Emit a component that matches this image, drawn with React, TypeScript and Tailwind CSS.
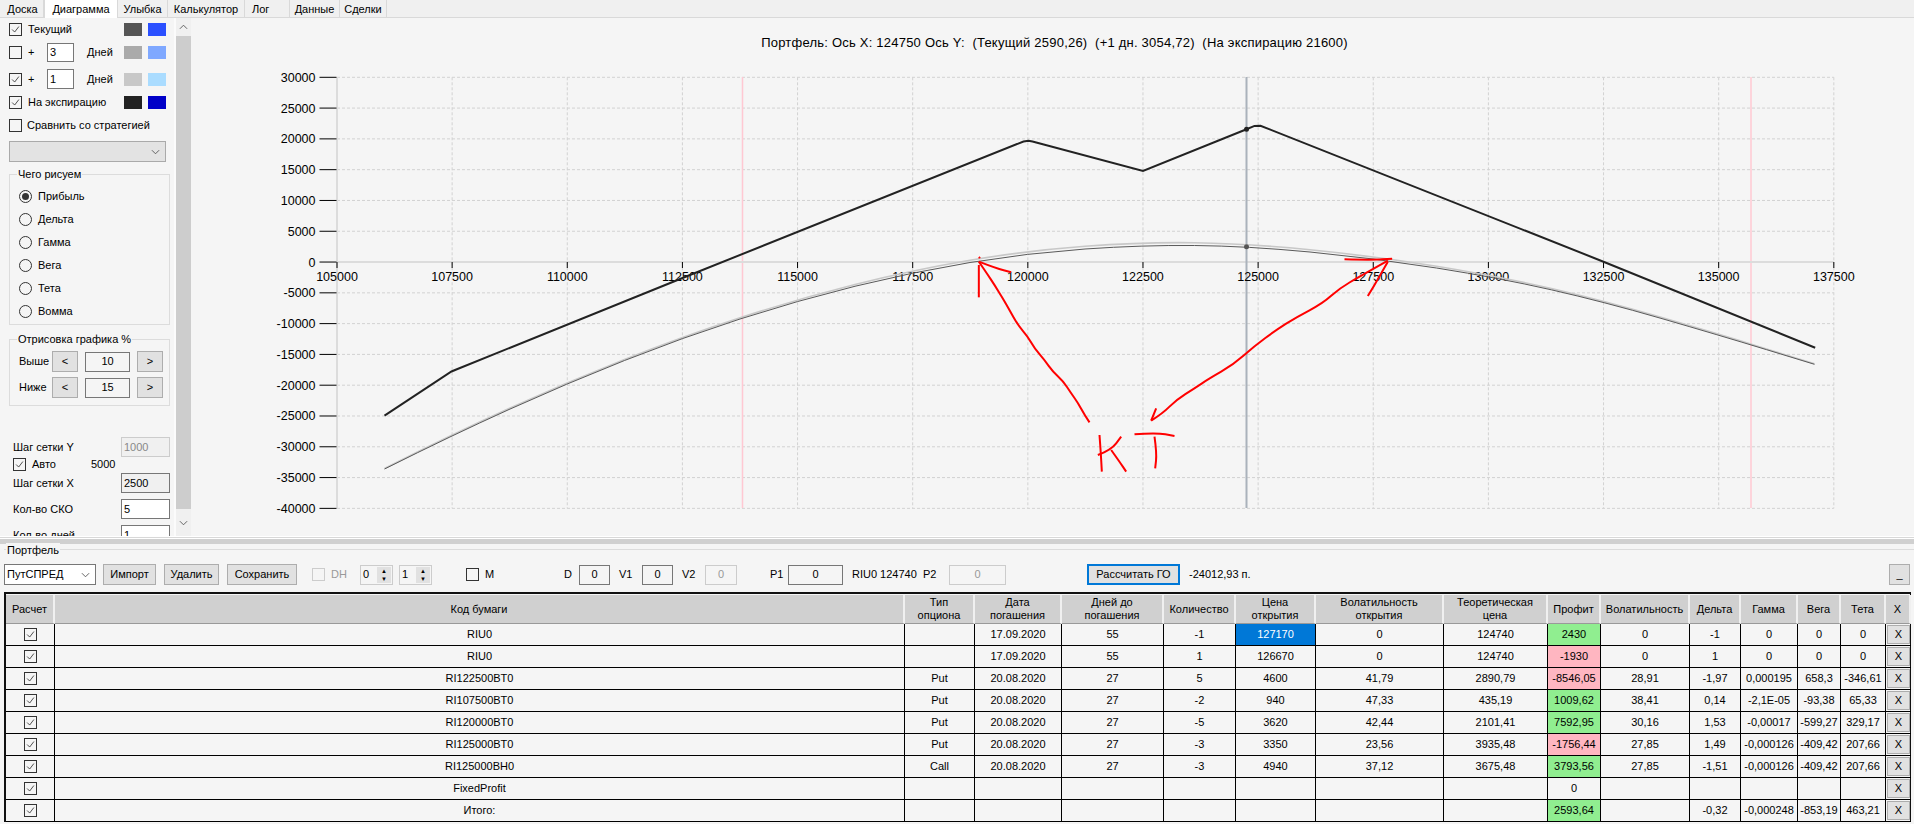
import React from 'react';

const Tick = () => (
  <svg viewBox="0 0 13 13" className="w-[11px] h-[11px]">
    <path d="M2.5 6.5 L5.5 9.5 L10.5 3" fill="none" stroke="#333" strokeWidth="1" />
  </svg>
);

const Check = ({ on = false, off = false }: { on?: boolean; off?: boolean }) => (
  <span className={`w-[13px] h-[13px] shrink-0 border flex items-center justify-center ${off ? 'border-[#ccc] bg-[#f5f5f5]' : 'border-[#333] bg-[#f5f5f5]'}`}>
    {on && <Tick />}
  </span>
);

const Radio = ({ label, on = false }: { label: string; on?: boolean }) => (
  <div className="h-[13px] flex items-center">
    <span className="w-[13px] h-[13px] rounded-full border border-[#333] flex items-center justify-center">
      {on && <span className="w-[7px] h-[7px] rounded-full bg-[#333]" />}
    </span>
    <span className="ml-[6px]">{label}</span>
  </div>
);

const Swatches = ({ a, b }: { a: string; b: string }) => (
  <div className="flex gap-[6px] ml-auto">
    <span className={`w-[18px] h-[13px] ${a}`} />
    <span className={`w-[18px] h-[13px] ${b}`} />
  </div>
);

const Chevron = () => (
  <svg viewBox="0 0 10 6" className="w-[9px] h-[6px]">
    <path d="M1 1 L5 5 L9 1" fill="none" stroke="#555" strokeWidth="1" />
  </svg>
);

const Group = ({ label, className, children }: { label: string; className: string; children: React.ReactNode }) => (
  <div className={`relative border border-[#dcdcdc] w-[161px] ${className}`}>
    <span className="absolute -top-[8px] left-[7px] px-px bg-[#f5f5f5] leading-[14px]">{label}</span>
    {children}
  </div>
);

const PercentRow = ({ label, value }: { label: string; value: string }) => (
  <div className="h-[21px] flex items-center">
    <span className="w-[42px] pl-[9px]">{label}</span>
    <button className="w-[26px] h-[21px] bg-[#e1e1e1] border border-[#adadad]">&lt;</button>
    <span className="ml-[7px] w-[45px] h-[20px] border border-[#777] flex items-center justify-center">{value}</span>
    <button className="ml-[7px] w-[26px] h-[21px] bg-[#e1e1e1] border border-[#adadad]">&gt;</button>
  </div>
);

const FieldRow = ({ label, value, className, inputClass }: { label: string; value: string; className: string; inputClass: string }) => (
  <div className={`h-[20px] flex items-center shrink-0 ${className}`}>
    <span className="w-[112px] pl-[4px]">{label}</span>
    <span className={`w-[49px] h-[20px] border flex items-center pl-[2px] ${inputClass}`}>{value}</span>
  </div>
);

const LeftPanel = () => (
  <div className="w-[174px] shrink-0 pl-[9px] overflow-hidden flex flex-col">
    <div className="mt-[5px] h-[13px] w-[157px] shrink-0 flex items-center">
      <Check on />
      <span className="ml-[6px]">Текущий</span>
      <Swatches a="bg-[#555555]" b="bg-[#2b50ff]" />
    </div>
    <div className="mt-[7px] h-[19px] w-[157px] shrink-0 flex items-center">
      <Check />
      <span className="ml-[6px] w-[19px]">+</span>
      <span className="w-[27px] h-[19px] border border-[#777] bg-white pl-[2px] flex items-center">3</span>
      <span className="ml-[13px]">Дней</span>
      <Swatches a="bg-[#aaaaaa]" b="bg-[#7fa8ff]" />
    </div>
    <div className="mt-[7px] h-[20px] w-[157px] shrink-0 flex items-center">
      <Check on />
      <span className="ml-[6px] w-[19px]">+</span>
      <span className="w-[27px] h-[20px] border border-[#777] bg-white pl-[2px] flex items-center">1</span>
      <span className="ml-[13px]">Дней</span>
      <Swatches a="bg-[#c8c8c8]" b="bg-[#aadcff]" />
    </div>
    <div className="mt-[7px] h-[13px] w-[157px] shrink-0 flex items-center">
      <Check on />
      <span className="ml-[6px]">На экспирацию</span>
      <Swatches a="bg-[#222222]" b="bg-[#0000c8]" />
    </div>
    <div className="mt-[10px] h-[13px] shrink-0 flex items-center">
      <Check />
      <span className="ml-[5px]">Сравнить со стратегией</span>
    </div>
    <div className="mt-[9px] h-[21px] w-[157px] shrink-0 bg-[#e3e3e3] border border-[#aaa] flex items-center justify-end pr-[5px]">
      <Chevron />
    </div>
    <Group label="Чего рисуем" className="mt-[12px] h-[151px] shrink-0 pt-[15px] pl-[9px] flex flex-col gap-[10px]">
      <Radio label="Прибыль" on />
      <Radio label="Дельта" />
      <Radio label="Гамма" />
      <Radio label="Вега" />
      <Radio label="Тета" />
      <Radio label="Вомма" />
    </Group>
    <Group label="Отрисовка графика %" className="mt-[14px] h-[67px] shrink-0 pt-[11px] flex flex-col gap-[5px]">
      <PercentRow label="Выше" value="10" />
      <PercentRow label="Ниже" value="15" />
    </Group>
    <FieldRow label="Шаг сетки Y" value="1000" className="mt-[31px]" inputClass="border-[#ccc] bg-[#f0f0f0] text-[#888]" />
    <div className="mt-px h-[12px] shrink-0 flex items-center pl-[4px]">
      <Check on />
      <span className="ml-[6px] w-[59px]">Авто</span>
      <span>5000</span>
    </div>
    <FieldRow label="Шаг сетки X" value="2500" className="mt-[3px]" inputClass="border-[#777] bg-[#f0f0f0]" />
    <FieldRow label="Кол-во СКО" value="5" className="mt-[6px]" inputClass="border-[#777] bg-white" />
    <FieldRow label="Кол-во дней" value="1" className="mt-[6px]" inputClass="border-[#777] bg-white" />
  </div>
);

const Scrollbar = () => (
  <div className="w-[17px] shrink-0 border-l-2 border-[#fbfbfb] bg-[#f0f0f0] flex flex-col items-center">
    <div className="h-[18px] flex items-center rotate-180"><Chevron /></div>
    <div className="w-full h-[473px] bg-[#cdcdcd]" />
    <div className="flex-1 flex items-center"><Chevron /></div>
  </div>
);

const gridX = Array.from({ length: 14 }, (_, i) => 337.5 + i * 115.14);
const gridY = Array.from({ length: 15 }, (_, i) => 77.3 + i * 30.79);

const pts = (list: number[][]) => list.map(([x, y]) => `${x},${y}`).join(' ');

// rounds the corners between points, so a hand-read curve doesn't look faceted
const smooth = (list: number[][]) => {
  let d = `M${list[0][0]} ${list[0][1]}`;
  for (let i = 1; i < list.length - 1; i++) {
    const mx = (list[i][0] + list[i + 1][0]) / 2;
    const my = (list[i][1] + list[i + 1][1]) / 2;
    d += ` Q${list[i][0]} ${list[i][1]} ${mx} ${my}`;
  }
  const last = list[list.length - 1];
  return `${d} L${last[0]} ${last[1]}`;
};

// red marker strokes, taken from the 3x crop at (900,220)
const red = (list: number[][]) => smooth(list.map(([x, y]) => [900 + x / 3, 220 + y / 3]));

const blackLine = [
  [385, 415.7], [452, 371.5], [458, 369], [683, 278], [1024, 141.5], [1029, 140.7], [1033, 141.5],
  [1143.5, 171], [1247, 129.3], [1255, 125.9], [1261, 125.7], [1604, 261.7], [1815.7, 347.7],
];

const curve = [
  [385, 469, 0.5], [452, 435.5, 1], [567, 383.5, 1], [683, 337.5, 1], [798, 300.5, 1.5], [913, 272, 2],
  [1028, 253, 2.5], [1143, 245, 3], [1247, 246, 2.5], [1374, 258, 2], [1500, 278, 1.5],
  [1604, 301.7, 1], [1719, 335, 1], [1815, 364.3, 0.5],
];

const redStrokes = [
  [[570, 607], [555, 585], [535, 548], [515, 520], [490, 482], [460, 455], [435, 420], [405, 385], [385, 350], [355, 315], [330, 270], [310, 235], [285, 195], [262, 160], [238, 125]],
  [[238, 125], [290, 145], [335, 157]],
  [[238, 135], [238, 232]],
  [[238, 111], [240, 113], [241, 115]],
  [[755, 602], [790, 580], [830, 540], [885, 505], [930, 475], [1000, 435], [1065, 378], [1130, 330], [1190, 292], [1270, 250], [1320, 205], [1380, 170], [1465, 122]],
  [[755, 602], [762, 585], [770, 565]],
  [[1335, 118], [1420, 120], [1478, 116]],
  [[1465, 125], [1425, 195], [1405, 228]],
  [[600, 645], [604, 700], [607, 755]],
  [[595, 705], [635, 690], [665, 650]],
  [[635, 690], [660, 725], [680, 755]],
  [[705, 643], [770, 638], [825, 648]],
  [[765, 650], [772, 700], [767, 745]],
];

const Chart = () => (
  <svg viewBox="192 18 1722 518" className="flex-1 h-[518px] block">
    {gridY.map((y) => <line key={y} x1={337.5} x2={1834.3} y1={y} y2={y} stroke="#d2d2d2" strokeDasharray="3 2" />)}
    {gridX.map((x) => <line key={x} x1={x} x2={x} y1={77.3} y2={508.3} stroke="#d2d2d2" strokeDasharray="3 2" />)}
    <line x1={743} x2={743} y1={77} y2={508} stroke="#ffc8d2" strokeWidth="1.5" />
    <line x1={1751.5} x2={1751.5} y1={77} y2={508} stroke="#ffc8d2" strokeWidth="1.5" />
    <line x1={337.5} x2={337.5} y1={77} y2={508} stroke="#dcdcdc" strokeWidth="2" />
    <line x1={337} x2={1834} y1={262} y2={262} stroke="#dcdcdc" strokeWidth="2" />
    <line x1={1247} x2={1247} y1={77} y2={508} stroke="#aab2bb" strokeWidth="2" />
    {gridY.map((y) => <line key={y} x1={320} x2={337} y1={y} y2={y} stroke="#000" />)}
    {gridX.map((x) => <line key={x} x1={x} x2={x} y1={262} y2={268} stroke="#000" />)}
    {gridY.map((y, i) => (
      <text key={y} x={316} y={y + 4.5} textAnchor="end" fontSize="12.5" fill="#000">{30000 - i * 5000}</text>
    ))}
    {gridX.map((x, i) => (
      <text key={x} x={x} y={280.5} textAnchor="middle" fontSize="12.5" fill="#000">{105000 + i * 2500}</text>
    ))}
    <path d={smooth(curve.map(([x, y, d]) => [x, y - d]))} fill="none" stroke="#c8c8c8" strokeWidth="1.6" />
    <path d={smooth(curve)} fill="none" stroke="#5a5a5a" strokeWidth="1" />
    <polyline points={pts(blackLine)} fill="none" stroke="#222" strokeWidth="2" />
    <circle cx={1247} cy={129.3} r={2.5} fill="#222" />
    <circle cx={1247} cy={246.7} r={2.5} fill="#555" />
    {redStrokes.map((s, i) => <path key={i} d={red(s)} fill="none" stroke="#f00" strokeWidth="2" />)}
    <text x={1055} y={47} textAnchor="middle" fontSize="13" letterSpacing="0.22" fill="#000" xmlSpace="preserve">
      Портфель: Ось X: 124750 Ось Y:  (Текущий 2590,26)  (+1 дн. 3054,72)  (На экспирацию 21600)
    </text>
  </svg>
);

const Box = ({ value, className }: { value: string; className: string }) => (
  <span className={`h-[20px] border flex items-center justify-center ${className}`}>{value}</span>
);

const Spinner = ({ value, className }: { value: string; className: string }) => (
  <span className={`w-[33px] h-[20px] border border-[#ccc] flex items-center pl-[2px] justify-between ${className}`}>
    {value}
    <span className="w-[14px] h-[16px] mr-px bg-[#e1e1e1] flex flex-col justify-around items-center text-[6px] leading-[6px]">
      <span>▲</span>
      <span>▼</span>
    </span>
  </span>
);

const ToolBtn = ({ label, className }: { label: string; className: string }) => (
  <button className={`h-[21px] bg-[#e1e1e1] border border-[#adadad] ${className}`}>{label}</button>
);

const Toolbar = () => (
  <div className="mt-[13px] h-[23px] flex items-center shrink-0">
    <div className="ml-[4px] w-[92px] h-[21px] border border-[#777] bg-white pl-[2px] pr-[5px] flex items-center justify-between">
      ПутСПРЕД
      <Chevron />
    </div>
    <ToolBtn label="Импорт" className="ml-[7px] w-[53px]" />
    <ToolBtn label="Удалить" className="ml-[8px] w-[55px]" />
    <ToolBtn label="Сохранить" className="ml-[8px] w-[70px]" />
    <span className="ml-[15px]"><Check off /></span>
    <span className="ml-[6px] w-[29px] text-[#999]">DH</span>
    <Spinner value="0" className="" />
    <Spinner value="1" className="ml-[6px]" />
    <span className="ml-[34px]"><Check /></span>
    <span className="ml-[6px] w-[79px]">M</span>
    <span className="w-[15px]">D</span>
    <Box value="0" className="w-[31px] border-[#777]" />
    <span className="ml-[9px] w-[23px]">V1</span>
    <Box value="0" className="w-[31px] border-[#777]" />
    <span className="ml-[9px] w-[23px]">V2</span>
    <Box value="0" className="w-[32px] border-[#ccc] text-[#999]" />
    <span className="ml-[33px] w-[18px]">P1</span>
    <Box value="0" className="w-[55px] border-[#777]" />
    <span className="ml-[9px] w-[71px]">RIU0 124740</span>
    <span className="w-[26px]">P2</span>
    <Box value="0" className="w-[57px] border-[#ccc] text-[#999]" />
    <button className="ml-[81px] w-[93px] h-[21px] bg-[#e1e1e1] border-2 border-[#0078d7]">Рассчитать ГО</button>
    <span className="ml-[9px]">-24012,93 п.</span>
    <ToolBtn label="_" className="ml-auto mr-[4px] w-[21px]" />
  </div>
);

const colWidths = [49, 850, 70, 87, 102, 72, 80, 128, 104, 53, 89, 51, 57, 43, 45, 25];

const headers = [
  ['Расчет'], ['Код бумаги'], ['Тип', 'опциона'], ['Дата', 'погашения'], ['Дней до', 'погашения'], ['Количество'],
  ['Цена', 'открытия'], ['Волатильность', 'открытия'], ['Теоретическая', 'цена'], ['Профит'], ['Волатильность'],
  ['Дельта'], ['Гамма'], ['Вега'], ['Тета'], ['X'],
];

const rows = [
  ['RIU0', '', '17.09.2020', '55', '-1', '127170', '0', '124740', '2430', '0', '-1', '0', '0', '0'],
  ['RIU0', '', '17.09.2020', '55', '1', '126670', '0', '124740', '-1930', '0', '1', '0', '0', '0'],
  ['RI122500BT0', 'Put', '20.08.2020', '27', '5', '4600', '41,79', '2890,79', '-8546,05', '28,91', '-1,97', '0,000195', '658,3', '-346,61'],
  ['RI107500BT0', 'Put', '20.08.2020', '27', '-2', '940', '47,33', '435,19', '1009,62', '38,41', '0,14', '-2,1E-05', '-93,38', '65,33'],
  ['RI120000BT0', 'Put', '20.08.2020', '27', '-5', '3620', '42,44', '2101,41', '7592,95', '30,16', '1,53', '-0,00017', '-599,27', '329,17'],
  ['RI125000BT0', 'Put', '20.08.2020', '27', '-3', '3350', '23,56', '3935,48', '-1756,44', '27,85', '1,49', '-0,000126', '-409,42', '207,66'],
  ['RI125000BH0', 'Call', '20.08.2020', '27', '-3', '4940', '37,12', '3675,48', '3793,56', '27,85', '-1,51', '-0,000126', '-409,42', '207,66'],
  ['FixedProfit', '', '', '', '', '', '', '', '0', '', '', '', '', ''],
  ['Итого:', '', '', '', '', '', '', '', '2593,64', '', '-0,32', '-0,000248', '-853,19', '463,21'],
];

const cellClass = (value: string, col: number, row: number) => {
  if (col === 8 && row !== 7) return value.startsWith('-') ? 'bg-[#ffb6c1]' : 'bg-[#90ee90]';
  if (col === 5 && row === 0) return 'bg-[#0078d7] text-white';
  return '';
};

const PortfolioTable = () => (
  <div className="ml-[4px] mt-[6px] w-[1907px] border-t-2 border-l-2 border-r border-[#111] pt-px shrink-0">
    <table className="table-fixed border-separate border-spacing-0 w-[1904px]">
      <colgroup>
        {colWidths.map((w, i) => <col key={i} style={{ width: w }} />)}
      </colgroup>
      <thead>
        <tr>
          {headers.map((h, i) => (
            <th key={i} className="h-[29px] p-0 font-normal leading-[13px] bg-[#d0d0d0] border-r-2 border-b border-r-[#f0f0f0] border-b-[#999]">
              {h.map((line) => <div key={line}>{line}</div>)}
            </th>
          ))}
        </tr>
      </thead>
      <tbody>
        {rows.map((r, ri) => (
          <tr key={ri}>
            <td className="h-[22px] p-0 border-r border-b border-black">
              <div className="flex justify-center"><Check on /></div>
            </td>
            {r.map((v, ci) => (
              <td key={ci} className={`h-[22px] p-0 text-center border-r border-b border-black whitespace-nowrap overflow-hidden ${cellClass(v, ci, ri)}`}>{v}</td>
            ))}
            <td className="h-[22px] p-0 border-b border-black">
              <div className="mx-[1px] h-[19px] bg-[#e1e1e1] border border-[#adadad] flex items-center justify-center">X</div>
            </td>
          </tr>
        ))}
      </tbody>
    </table>
  </div>
);

const tabs = [
  { label: 'Доска', w: 'w-[42px] justify-center' },
  { label: 'Диаграмма', w: 'w-[74px] justify-center', active: true },
  { label: 'Улыбка', w: 'w-[50px] justify-center' },
  { label: 'Калькулятор', w: 'w-[77px] justify-center' },
  { label: 'Лог', w: 'w-[45px] pl-[7px]' },
  { label: 'Данные', w: 'w-[50px] justify-center' },
  { label: 'Сделки', w: 'w-[47px] justify-center' },
];

export default function App() {
  return (
    <div className="w-[1914px] h-[824px] overflow-hidden bg-[#f5f5f5] text-black text-[11px] font-['Liberation_Sans',sans-serif] flex flex-col">
      <div className="h-[18px] shrink-0 pl-[2px] flex border-b border-[#d9d9d9] bg-[#f0f0f0]">
        {tabs.map((t) => (
          <div key={t.label} className={`${t.w} h-[18px] flex items-center border-r border-[#d9d9d9] ${t.active ? 'bg-white border-l' : ''}`}>
            {t.label}
          </div>
        ))}
      </div>
      <div className="h-[518px] shrink-0 flex">
        <LeftPanel />
        <Scrollbar />
        <Chart />
      </div>
      <div className="h-[1px] shrink-0 bg-white" />
      <div className="h-[1px] shrink-0 bg-[#d8d8d8]" />
      <div className="h-[1px] shrink-0 bg-white" />
      <div className="h-[5px] shrink-0 bg-[#d0d0d0]" />
      <div className="relative mt-[5px] h-px shrink-0 ml-[4px] bg-[#dcdcdc]">
        <span className="absolute -top-[6px] left-[2px] px-[1px] bg-[#f5f5f5] leading-[14px]">Портфель</span>
      </div>
      <Toolbar />
      <PortfolioTable />
    </div>
  );
}
